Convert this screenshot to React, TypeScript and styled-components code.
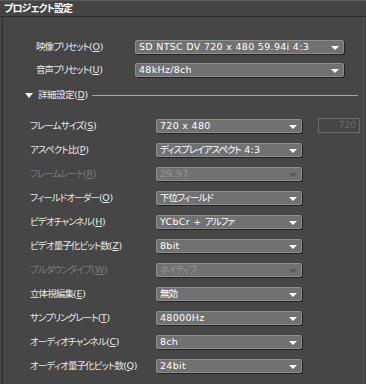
import styled, { createGlobalStyle } from "styled-components";

const GlobalStyle = createGlobalStyle`
  html, body {
    margin: 0;
    padding: 0;
    background: #464646;
  }
  body {
    font-family: "DejaVu Sans", "Noto Sans CJK JP", sans-serif;
  }
`;

const Window = styled.div`
  width: 366px;
  height: 384px;
  background: #464646;
  display: flex;
  flex-direction: column;
  overflow: hidden;
`;

const TitleBar = styled.div`
  height: 17px;
  padding-left: 4px;
  background: #444444;
  border-top: 1px solid #5a5a5a;
  border-bottom: 1px solid #2c2c2c;
  box-sizing: border-box;
  color: #ffffff;
  font-family: "Noto Sans CJK JP", sans-serif;
  font-size: 10px;
  font-weight: 700;
  font-feature-settings: "palt" 1;
  letter-spacing: -0.9px;
  line-height: 14px;
`;

const Panel = styled.div`
  flex: 1;
  margin: 0 2px;
  border-left: 1px solid #2c2c2c;
  border-right: 1px solid #555555;
  display: flex;
  flex-direction: column;
  padding-top: 22px;
`;

const PresetRow = styled.div`
  display: flex;
  align-items: center;
  height: 15px;
  margin-bottom: 8px;
  padding-left: 33px;
`;

const DetailRow = styled.div`
  display: flex;
  align-items: center;
  height: 15px;
  margin-bottom: 9px;
  padding-left: 27px;
`;

// CJK runs get their own tracking so kana sit as tight as in the original UI font
const Cjk = styled.span<{ $ls: number }>`
  letter-spacing: ${(p) => p.$ls}px;
`;

const Label = styled.div<{ $width: number; $disabled?: boolean }>`
  width: ${(p) => p.$width}px;
  flex: none;
  color: ${(p) => (p.$disabled ? "#7c7c7c" : "#e8e8e8")};
  font-size: 9.5px;
  font-feature-settings: "palt" 1;
  letter-spacing: -0.3px;
  line-height: 14px;
  white-space: nowrap;
`;

const Select = styled.div<{ $width: number; $disabled?: boolean }>`
  position: relative;
  width: ${(p) => p.$width}px;
  height: 14px;
  box-sizing: border-box;
  background: #717171;
  border: 1px solid #8f8f8f;
  border-radius: 2px;
  box-shadow: 1px 1px 0 #232323;
  padding-left: 3px;
  color: ${(p) => (p.$disabled ? "#959595" : "#ffffff")};
  font-size: 9.5px;
  font-feature-settings: "palt" 1;
  letter-spacing: 0.3px;
  line-height: 12px;
  white-space: nowrap;
  overflow: hidden;
`;

const Arrow = styled.span<{ $disabled?: boolean }>`
  position: absolute;
  right: 4px;
  top: 5px;
  width: 0;
  height: 0;
  border-left: 4px solid transparent;
  border-right: 4px solid transparent;
  border-top: 4px solid ${(p) => (p.$disabled ? "#555555" : "#ffffff")};
`;

const NumField = styled.div`
  margin-left: 16px;
  width: 42px;
  height: 15px;
  box-sizing: border-box;
  border: 1px solid #6a6a6a;
  color: #6e6e6e;
  font-size: 9px;
  line-height: 13px;
  text-align: right;
  padding-right: 3px;
`;

const Expander = styled.div`
  display: flex;
  align-items: center;
  height: 12px;
  margin-top: 4px;
  margin-bottom: 17px;
  padding-left: 22px;
  padding-right: 5px;
  color: #e8e8e8;
  font-size: 9.5px;
  font-feature-settings: "palt" 1;
  letter-spacing: -0.3px;
  line-height: 12px;
  white-space: nowrap;
`;

const ExpandArrow = styled.span`
  width: 0;
  height: 0;
  border-left: 4px solid transparent;
  border-right: 4px solid transparent;
  border-top: 5px solid #f0f0f0;
  margin-right: 5px;
`;

const Rule = styled.div`
  flex: 1;
  height: 1px;
  background: #a8a8a8;
  margin-left: 4px;
`;

type Item = {
  label: string;
  key: string;
  value: string;
  disabled?: boolean;
  field?: string;
};

const presets: Item[] = [
  { label: "映像プリセット", key: "O", value: "SD NTSC DV 720 x 480 59.94i 4:3" },
  { label: "音声プリセット", key: "U", value: "48kHz/8ch" },
];

const details: Item[] = [
  { label: "フレームサイズ", key: "S", value: "720 x 480", field: "720" },
  { label: "アスペクト比", key: "P", value: "ディスプレイアスペクト 4:3" },
  { label: "フレームレート", key: "R", value: "29.97", disabled: true },
  { label: "フィールドオーダー", key: "O", value: "下位フィールド" },
  { label: "ビデオチャンネル", key: "H", value: "YCbCr + アルファ" },
  { label: "ビデオ量子化ビット数", key: "Z", value: "8bit" },
  { label: "プルダウンタイプ", key: "W", value: "ネイティブ", disabled: true },
  { label: "立体視編集", key: "E", value: "無効" },
  { label: "サンプリングレート", key: "T", value: "48000Hz" },
  { label: "オーディオチャンネル", key: "C", value: "8ch" },
  { label: "オーディオ量子化ビット数", key: "Q", value: "24bit" },
];

const cjkRun = /([\u3000-\u30ff\u4e00-\u9fff]+)/;

const withCjk = (text: string, ls: number) =>
  text.split(cjkRun).map((part, i) =>
    cjkRun.test(part) ? (
      <Cjk key={i} $ls={ls}>
        {part}
      </Cjk>
    ) : (
      part
    )
  );

const Accel = ({ k }: { k: string }) => (
  <>
    (<u>{k}</u>)
  </>
);

export default function App() {
  return (
    <>
      <GlobalStyle />
      <Window>
        <TitleBar>プロジェクト設定</TitleBar>
        <Panel>
          {presets.map((p) => (
            <PresetRow key={p.label}>
              <Label $width={99}>
                {withCjk(p.label, -0.9)}
                <Accel k={p.key} />
              </Label>
              <Select $width={209}>
                {withCjk(p.value, -1)}
                <Arrow />
              </Select>
            </PresetRow>
          ))}
          <Expander>
            <ExpandArrow />
            {withCjk("詳細設定", -0.5)}
            <Accel k="D" />
            <Rule />
          </Expander>
          {details.map((d) => (
            <DetailRow key={d.label}>
              <Label $width={126} $disabled={d.disabled}>
                {withCjk(d.label, -0.9)}
                <Accel k={d.key} />
              </Label>
              <Select $width={146} $disabled={d.disabled}>
                {withCjk(d.value, -1)}
                <Arrow $disabled={d.disabled} />
              </Select>
              {d.field && <NumField>{d.field}</NumField>}
            </DetailRow>
          ))}
        </Panel>
      </Window>
    </>
  );
}
